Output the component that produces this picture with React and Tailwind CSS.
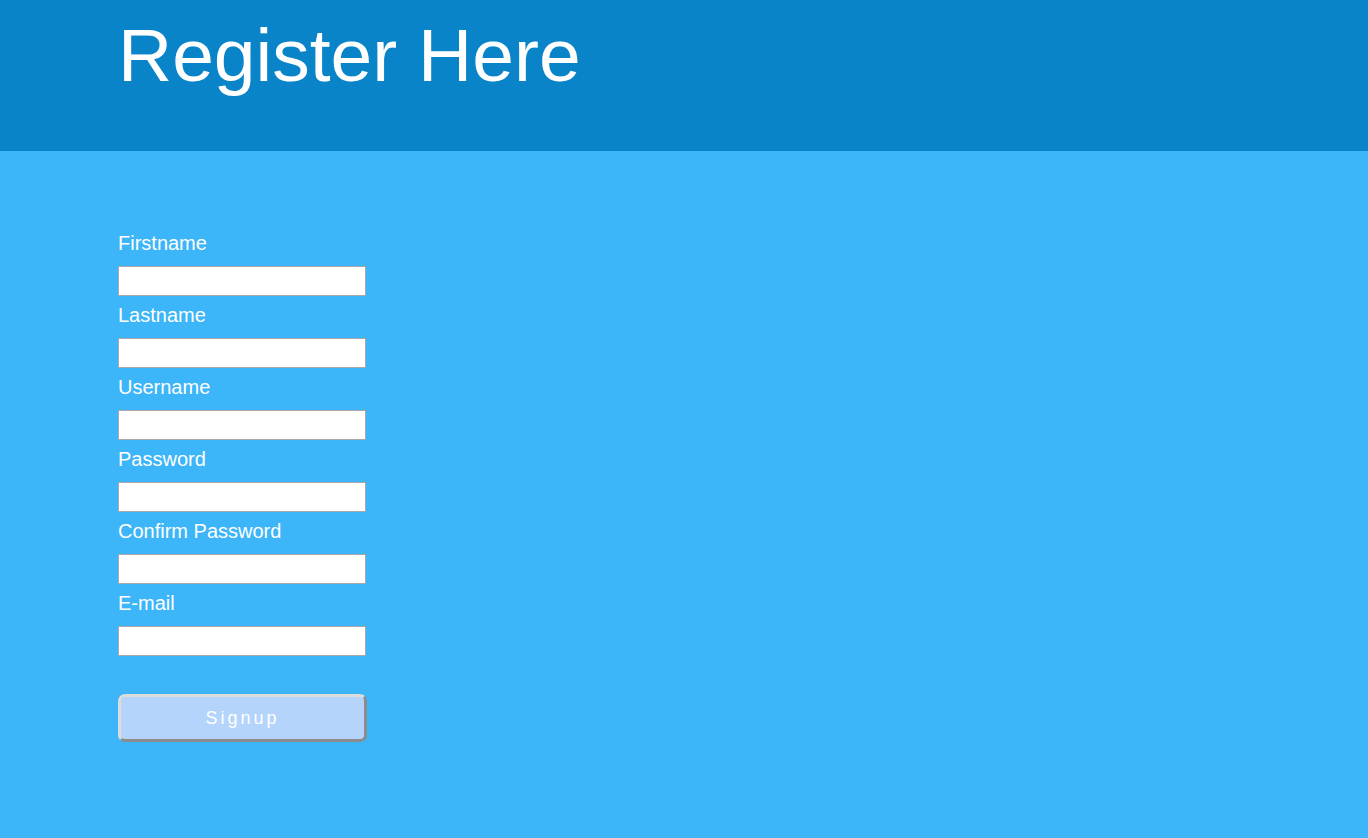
import React from "react";

const fields = [
  { label: "Firstname", type: "text" },
  { label: "Lastname", type: "text" },
  { label: "Username", type: "text" },
  { label: "Password", type: "password" },
  { label: "Confirm Password", type: "password" },
  { label: "E-mail", type: "email" },
];

export default function App() {
  return (
    <div className="min-h-[838px] bg-[#3cb5f9] font-['Liberation_Sans',Arial,sans-serif] text-white">
      <header className="h-[151px] bg-[#0984c9] px-[118px]">
        <h1 className="pt-[9px] text-[75px] leading-[92px]">Register Here</h1>
      </header>

      <form className="px-[118px] pt-[73px]" onSubmit={(e) => e.preventDefault()}>
        {fields.map((field, index) => (
          <div key={index} className="pt-[8px]">
            <label className="block text-[20px] leading-[23px]">{field.label}</label>
            <input
              type={field.type}
              className="mt-[11px] block h-[30px] w-[248px] border border-[#a9a9a9] bg-white text-black"
            />
          </div>
        ))}

        <button
          type="submit"
          className="mt-[38px] h-[48px] w-[249px] rounded-[7px] border-[3px] border-t-[#dcdcdc] border-l-[#dcdcdc] border-r-[#8c8c8c] border-b-[#8c8c8c] bg-[#b4d4fc] text-[18px] tracking-[3px] text-white"
        >
          Signup
        </button>
      </form>
    </div>
  );
}
